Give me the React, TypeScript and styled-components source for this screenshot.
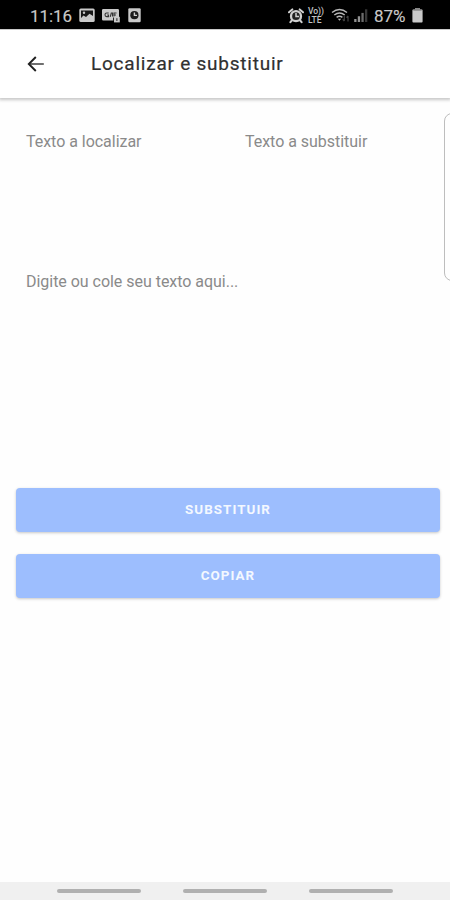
import React from 'react';
import styled, { createGlobalStyle } from 'styled-components';

const GlobalStyle = createGlobalStyle`
  * { box-sizing: border-box; }
  html, body { margin: 0; padding: 0; background: #fefefe; overflow: hidden; }
  body { font-family: Roboto, sans-serif; }
`;

const Screen = styled.div`
  width: 450px;
  height: 900px;
  display: flex;
  flex-direction: column;
  overflow: hidden;
  background: #fefefe;
`;

const StatusBar = styled.header`
  height: 29px;
  flex: none;
  display: flex;
  justify-content: space-between;
  align-items: center;
  padding: 2px 27px 0 30px;
  background: #000;
  color: #c9c9c9;
`;

const StatusGroup = styled.div`
  display: flex;
  align-items: center;
  svg { display: block; flex: none; }
`;

const StatusText = styled.span<{ $width: number }>`
  width: ${(p) => p.$width}px;
  font-size: 17px;
  line-height: 20px;
  letter-spacing: -0.1px;
  -webkit-text-stroke: 0.15px currentColor;
  white-space: nowrap;
`;

const Gap = styled.span<{ $size: number }>`
  flex: none;
  width: ${(p) => p.$size}px;
`;

const AppBar = styled.div`
  height: 69px;
  flex: none;
  display: flex;
  align-items: center;
  padding: 0 26px;
  background: #fff;
  border-top: 1px solid #c9c9c9;
  box-shadow: 0 1px 3px 1px rgba(0, 0, 0, 0.22);
`;

const BackButton = styled.button`
  width: 20px;
  height: 20px;
  padding: 0;
  border: 0;
  background: none;
  margin-right: 45px;
  svg { display: block; }
`;

const Title = styled.h1`
  margin: 0;
  font-size: 19px;
  line-height: 24px;
  font-weight: 400;
  letter-spacing: 0.77px;
  -webkit-text-stroke: 0.2px currentColor;
  color: #303030;
  white-space: nowrap;
`;

const Content = styled.main`
  flex: 1;
  display: flex;
  flex-direction: column;
`;

const Fields = styled.div`
  height: 168px;
  margin-top: 15px;
  display: grid;
  grid-template-columns: 219px 199px 60px;
  padding-left: 26px;
  overflow: hidden;
`;

const Hint = styled.label`
  padding-top: 19px;
  font-size: 16px;
  line-height: 20px;
  letter-spacing: -0.03px;
  color: #8a8a8a;
  white-space: nowrap;
`;

const SideCard = styled.div`
  border: 1px solid #bdbdbd;
  border-radius: 8px;
`;

const TextArea = styled.div`
  height: 235px;
  margin-top: -28px;
  padding: 0 26px;
  display: flex;
`;

const Actions = styled.div`
  display: flex;
  flex-direction: column;
  gap: 22px;
  padding: 0 10px 0 16px;
`;

const ActionButton = styled.button`
  height: 44px;
  border: 0;
  border-radius: 4px;
  background: #9dbefe;
  color: #f4f8ff;
  font: 700 13.4px/44px Roboto, sans-serif;
  letter-spacing: 1.05px;
  padding: 0;
  box-shadow: 0 1px 3px rgba(0, 0, 0, 0.22);
`;

const NavBar = styled.footer`
  height: 18px;
  flex: none;
  display: flex;
  justify-content: center;
  gap: 42px;
  padding-top: 7px;
  background: #f0f0f0;
`;

const NavPill = styled.span`
  width: 84px;
  height: 4px;
  border-radius: 2px;
  background: #b0b0b0;
`;

const PictureIcon = () => (
  <svg width="16" height="15" viewBox="0 0 16 15">
    <rect x="0.3" y="0.5" width="15.4" height="13.5" rx="1.5" fill="#c9c9c9" />
    <path d="M2 2.5H14V8L10.5 5.8L7 9L4.5 7.5L2 10Z" fill="#171717" />
    <circle cx="5" cy="4.8" r="1.2" fill="#c9c9c9" />
  </svg>
);

const GifIcon = () => (
  <svg width="18" height="15" viewBox="0 0 18 15">
    <path d="M1.2 1H15.8Q17 1 17 2.2V14H12V12.5H1.2Q0 12.5 0 11.3V2.2Q0 1 1.2 1Z" fill="#c9c9c9" />
    <path d="M6.7 5H4.6Q3 5 3 6.8T4.6 8.6H6.5V7H5.2M8.2 8.8L9.3 5H10.5V8.6M12 8.6V5H14.5M12 7H14" fill="none" stroke="#333" strokeWidth="1.1" />
    <path d="M12 8.8H17.8V14.4H12Z" fill="#c9c9c9" />
    <path d="M11.5 9.5V13M14.9 10.2V13" stroke="#222" strokeWidth="1" />
  </svg>
);

const ClockIcon = () => (
  <svg width="13" height="15" viewBox="0 0 13 15">
    <rect x="0.3" y="0.3" width="12.4" height="14" rx="1.2" fill="#c9c9c9" />
    <circle cx="6.4" cy="7.2" r="4.1" fill="#1c1c1c" />
    <path d="M6.4 4.5V7.4H9" fill="none" stroke="#d0d0d0" strokeWidth="1.4" />
  </svg>
);

const AlarmIcon = () => (
  <svg width="16" height="16" viewBox="0 0 16 16">
    <path d="M1 4.3L4.3 1.4M11.7 1.4L15 4.3M3.8 12.5L2.4 14.2M12.2 12.5L13.6 14.2" stroke="#d0d0d0" strokeWidth="2" strokeLinecap="round" />
    <circle cx="8" cy="8.2" r="5" fill="#202020" stroke="#d0d0d0" strokeWidth="2.3" />
    <path d="M8 5V8.5H11" fill="none" stroke="#d0d0d0" strokeWidth="1.5" />
  </svg>
);

const VolteLabel = styled.span`
  display: flex;
  flex-direction: column;
  width: 17px;
  font-size: 8.5px;
  line-height: 9px;
  font-weight: 500;
  color: #c4c4c4;
`;

const WifiIcon = () => (
  <svg width="19" height="15" viewBox="0 0 19 15">
    <path d="M1 4.5Q8.5 -1.5 16 4.5M3.3 7Q8.5 2.8 13.7 7M5.6 9.4Q8.5 7.2 11.4 9.4" fill="none" stroke="#b8b8b8" strokeWidth="1.5" />
    <path d="M6.8 10.7H10.2L8.5 12.8Z" fill="#b8b8b8" />
    <path d="M13.3 7.5V13M11.7 11.3L13.3 13.2M17 8V13.5M15.5 9.7L17 8" fill="none" stroke="#444" strokeWidth="1.2" />
  </svg>
);

const SignalIcon = () => (
  <svg width="14" height="15" viewBox="0 0 14 15">
    <path d="M0.2 11H2.5V14H0.2ZM3.8 8.3H6.1V14H3.8Z" fill="#929292" />
    <path d="M7.4 4.9H9.7V14H7.4Z" fill="#6c6c6c" />
    <path d="M11 1.3H13.3V14H11Z" fill="#383838" />
  </svg>
);

const BatteryIcon = () => (
  <svg width="11" height="15" viewBox="0 0 11 15">
    <path d="M3 0H8V1.5H9.7Q10.6 1.5 10.6 2.5V13.5Q10.6 14.5 9.7 14.5H1.3Q0.4 14.5 0.4 13.5V2.5Q0.4 1.5 1.3 1.5H3Z" fill="#c9c9c9" />
    <path d="M3 0H8V1.5H9.7V2.7H1.3V1.5H3Z" fill="#888" />
  </svg>
);

const BackArrow = () => (
  <svg width="20" height="20" viewBox="0 0 20 20" fill="none">
    <path d="M17.8 10H3" stroke="#555" strokeWidth="1.7" />
    <path d="M9.8 3L2.8 10L9.8 17" stroke="#202020" strokeWidth="1.9" />
  </svg>
);

export default function App() {
  return (
    <>
      <GlobalStyle />
      <Screen>
        <StatusBar>
          <StatusGroup>
            <StatusText $width={49}>11:16</StatusText>
            <PictureIcon />
            <Gap $size={7} />
            <GifIcon />
            <Gap $size={8} />
            <ClockIcon />
          </StatusGroup>
          <StatusGroup>
            <AlarmIcon />
            <Gap $size={4} />
            <VolteLabel><span>Vo))</span><span>LTE</span></VolteLabel>
            <Gap $size={6} />
            <WifiIcon />
            <Gap $size={4} />
            <SignalIcon />
            <Gap $size={6} />
            <StatusText $width={38}>87%</StatusText>
            <BatteryIcon />
          </StatusGroup>
        </StatusBar>
        <AppBar>
          <BackButton aria-label="Voltar"><BackArrow /></BackButton>
          <Title>Localizar e substituir</Title>
        </AppBar>
        <Content>
          <Fields>
            <Hint>Texto a localizar</Hint>
            <Hint>Texto a substituir</Hint>
            <SideCard />
          </Fields>
          <TextArea>
            <Hint>Digite ou cole seu texto aqui...</Hint>
          </TextArea>
          <Actions>
            <ActionButton>SUBSTITUIR</ActionButton>
            <ActionButton>COPIAR</ActionButton>
          </Actions>
        </Content>
        <NavBar>
          <NavPill />
          <NavPill />
          <NavPill />
        </NavBar>
      </Screen>
    </>
  );
}
